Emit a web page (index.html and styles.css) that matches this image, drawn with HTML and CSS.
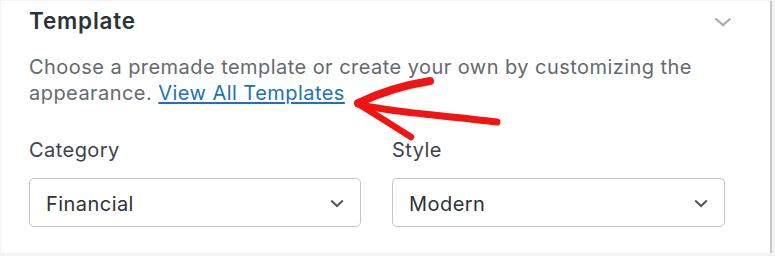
FILE: index.html
```html
<!DOCTYPE html>
<html>
<head>
<meta charset="utf-8">
<link rel="stylesheet" href="styles.css">
</head>
<body>
<div class="panel">
  <div class="head">
    <h2 class="title">Template</h2>
    <svg class="toggle" width="18" height="10" viewBox="0 0 18 10"><path d="M1.5 1.5 L9 8 L16.5 1.5" fill="none" stroke="#a7aaad" stroke-width="2.2"/></svg>
  </div>
  <p class="desc">Choose a premade template or create your own by customizing the appearance. <a href="#" class="link">View All Templates</a></p>
  <div class="fields">
    <div class="field">
      <div class="label">Category</div>
      <div class="select"><span>Financial</span><svg class="chev" width="14" height="9" viewBox="0 0 14 9"><path d="M1.2 1.5 L7 7 L12.8 1.5" fill="none" stroke="#50575e" stroke-width="2"/></svg></div>
    </div>
    <div class="field">
      <div class="label">Style</div>
      <div class="select"><span>Modern</span><svg class="chev" width="14" height="9" viewBox="0 0 14 9"><path d="M1.2 1.5 L7 7 L12.8 1.5" fill="none" stroke="#50575e" stroke-width="2"/></svg></div>
    </div>
  </div>
</div>
<svg class="arrow" width="170" height="80" viewBox="0 0 170 80">
  <g fill="none" stroke="#f01414" stroke-linecap="round" stroke-linejoin="round">
    <path d="M90 11 Q52 17 18 33" stroke-width="8"/>
    <path d="M18 34 C40 41 100 45 157 52" stroke-width="7"/>
    <path d="M20 35 Q46 51 71 67" stroke-width="6.5"/>
  </g>
</svg>
</body>
</html>
```
FILE: styles.css
```css
html, body {
  margin: 0;
  padding: 0;
}
body {
  position: relative;
  background: #f3f3f3;
  width: 775px;
  height: 256px;
  overflow: hidden;
  font-family: Inter, "Noto Sans", sans-serif;
}
.panel {
  box-sizing: border-box;
  margin: 1px 3px 0 1px;
  height: 252px;
  background: #ffffff;
  border-right: 2px solid #c6c7c9;
  padding: 7px 0 0 28px;
}
.head {
  display: flex;
  align-items: center;
  justify-content: space-between;
  padding-right: 38px;
}
.title {
  margin: 0;
  font-size: 22.5px;
  line-height: 26px;
  font-weight: 600;
  letter-spacing: 0.8px;
  color: #2c3338;
}
.toggle {
  display: block;
  margin-top: 2px;
}
.desc {
  margin: 20px 0 0 0;
  width: 700px;
  font-size: 20px;
  line-height: 26px;
  letter-spacing: 0.45px;
  color: #646970;
}
.link {
  color: #2271b1;
  text-decoration: underline;
  text-underline-offset: 2px;
  text-decoration-thickness: 1.5px;
}
.fields {
  display: grid;
  grid-template-columns: 332px 333px;
  column-gap: 31px;
  margin-top: 31px;
}
.label {
  font-size: 20px;
  line-height: 26px;
  letter-spacing: 0.45px;
  color: #3c434a;
}
.select {
  box-sizing: border-box;
  margin-top: 15px;
  height: 49px;
  border: 1px solid #c3c4c7;
  border-radius: 5px;
  display: flex;
  align-items: center;
  justify-content: space-between;
  padding: 2px 16px 0 16px;
  font-size: 20px;
  letter-spacing: 0.45px;
  color: #2c3338;
}
.chev {
  display: block;
}
.arrow {
  position: absolute;
  left: 340px;
  top: 70px;
}
```
